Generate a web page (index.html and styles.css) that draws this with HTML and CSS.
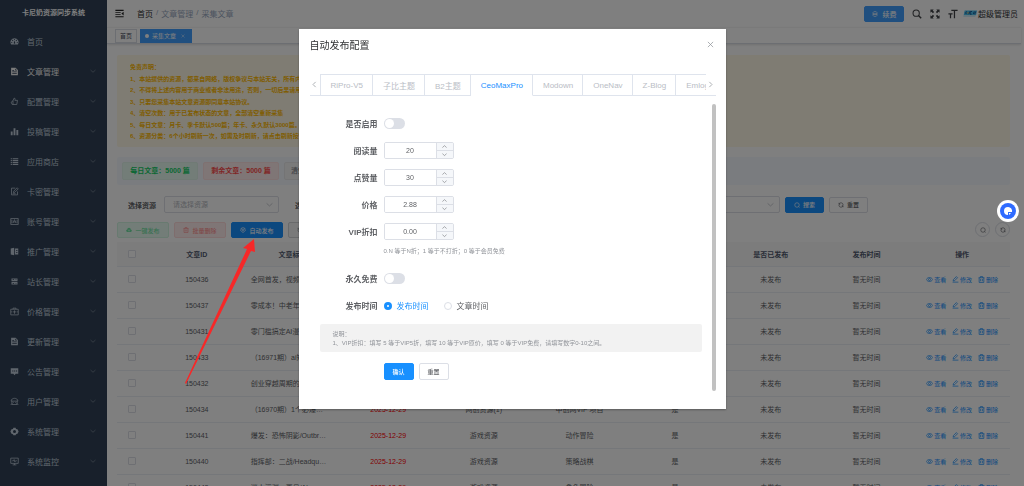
FILE: index.html
```
<!DOCTYPE html>
<html lang="zh-CN">
<head>
    <meta charset="UTF-8">
    <title>卡尼奶资源同步系统</title>
    <link rel="stylesheet" href="styles.css">
</head>
<body>
    <!-- 图标 -->
    <svg class="sprite" aria-hidden="true">
        <symbol id="i-dashboard" viewBox="0 0 24 24"><path fill="currentColor" fill-rule="evenodd" d="M12 3a11 11 0 0 0-9 17h18a11 11 0 0 0-9-17zM11 5h2v3h-2zM5 8l2-1 2 2-2 2zM17 7l2 1-2 3-2-2zM3 14h3v2H3zM18 14h3v2h-3zM12 9l2 7a2 2 0 1 1-4 0z"/></symbol>
        <symbol id="i-doc" viewBox="0 0 24 24"><path fill="currentColor" fill-rule="evenodd" d="M3 2h12l6 6v14H3zM14 4v5h5zM6 12v2h12v-2zM6 16v2h12v-2zM6 8v2h5V8z"/></symbol>
        <symbol id="i-thumb" viewBox="0 0 24 24"><path fill="none" stroke="currentColor" stroke-width="2" d="M8 10l3-7c3 0 3 3 2 6h7l-2 11H8zM8 10L3 14l3 6h2"/></symbol>
        <symbol id="i-bars" viewBox="0 0 24 24"><path fill="currentColor" d="M2 12h5v10H2zM9.500 3h5v19h-5zM17 8h5v14h-5z"/></symbol>
        <symbol id="i-list" viewBox="0 0 24 24"><path fill="currentColor" d="M2 3h3v3H2zM7 3h15v3H7zM2 8h3v3H2zM7 8h15v3H7zM2 13h3v3H2zM7 13h15v3H7zM2 18h3v3H2zM7 18h15v3H7z"/></symbol>
        <symbol id="i-edit" viewBox="0 0 24 24"><path fill="none" stroke="currentColor" stroke-width="2" d="M14 3H4v18h16v-9M9 15l1-4 9-9 3 3-9 9zM7 18h8"/></symbol>
        <symbol id="i-account" viewBox="0 0 24 24"><path fill="none" stroke="currentColor" stroke-width="2" d="M2 4h20v16H2zM8 16l4-9 4 9M9 13h6M5 7v10M19 7v10"/></symbol>
        <symbol id="i-book" viewBox="0 0 24 24"><path fill="currentColor" fill-rule="evenodd" d="M2 4l9-2v20l-9-2zM13 4h9v16h-9zM16 8v2h4V8zM16 13v2h4v-2z"/></symbol>
        <symbol id="i-server" viewBox="0 0 24 24"><path fill="currentColor" fill-rule="evenodd" d="M4 4h16v7H4zM4 13h16v7H4zM7 6v2h4V6zM15 6v2h2V6zM7 16v2h4v-2zM15 16v2h2v-2z"/></symbol>
        <symbol id="i-price" viewBox="0 0 24 24"><path fill="none" stroke="currentColor" stroke-width="2" d="M2 6h20v15H2zM8 6V3h8v3M12 9v9M7 13h10M2 13h3M19 13h3"/></symbol>
        <symbol id="i-chat" viewBox="0 0 24 24"><path fill="currentColor" fill-rule="evenodd" d="M2 3h20v15h-7l-3 4-3-4H2zM6 9v3h3V9zM11 9v3h3V9zM16 9v3h3V9z"/></symbol>
        <symbol id="i-user" viewBox="0 0 24 24"><path fill="none" stroke="currentColor" stroke-width="2" d="M3 11c0-10 18-10 18 0zM5 11v9h14v-9M9 14v2M15 14v2M2 21l4-4M22 21l-4-4"/></symbol>
        <symbol id="i-gear" viewBox="0 0 24 24"><path fill="currentColor" fill-rule="evenodd" d="M9 2h6l1 3 4 1 3 6-3 6-4 1-1 3H9l-1-3-4-1-3-6 3-6 4-1zM12 8a4 4 0 1 0 0 8 4 4 0 0 0 0-8z"/></symbol>
        <symbol id="i-setting" viewBox="0 0 24 24"><path fill="none" stroke="currentColor" stroke-width="3" d="M12 2l3 2 5 2v5l1 3-4 4-3 3h-4l-3-3-4-4 1-3V6l5-2z"/><circle cx="12" cy="12" r="3" fill="none" stroke="currentColor" stroke-width="2.500"/></symbol>
        <symbol id="i-monitor" viewBox="0 0 24 24"><path fill="none" stroke="currentColor" stroke-width="2" d="M2 3h20v14H2zM7 21h10M12 17v4M6 10h3l2-3 2 6 2-3h3"/></symbol>
        <symbol id="i-down" viewBox="0 0 24 24"><path fill="none" stroke="currentColor" stroke-width="2.500" d="M2 8l10 9 10-9"/></symbol>
        <symbol id="i-up" viewBox="0 0 24 24"><path fill="none" stroke="currentColor" stroke-width="2.500" d="M2 17l10-9 10 9"/></symbol>
        <symbol id="i-left" viewBox="0 0 24 24"><path fill="none" stroke="currentColor" stroke-width="2.500" d="M16 3l-9 9 9 9"/></symbol>
        <symbol id="i-right" viewBox="0 0 24 24"><path fill="none" stroke="currentColor" stroke-width="2.500" d="M8 3l9 9-9 9"/></symbol>
        <symbol id="i-close" viewBox="0 0 24 24"><path fill="none" stroke="currentColor" stroke-width="2.500" d="M3 3l18 18M21 3L3 21"/></symbol>
        <symbol id="i-fold" viewBox="0 0 24 24"><path fill="currentColor" d="M1 2h22v3H1zM1 8h14v2H1zM1 13h14v2H1zM1 19h22v3H1zM23 7v10l-6-5z"/></symbol>
        <symbol id="i-search" viewBox="0 0 24 24"><circle cx="10" cy="10" r="7.500" fill="none" stroke="currentColor" stroke-width="2.500"/><path stroke="currentColor" stroke-width="3.500" d="M15.500 15.500L22 22"/></symbol>
        <symbol id="i-find" viewBox="0 0 24 24"><circle cx="12" cy="12" r="9" fill="none" stroke="currentColor" stroke-width="2.500"/><path stroke="currentColor" stroke-width="2.500" d="M18 18l4 4"/></symbol>
        <symbol id="i-full" viewBox="0 0 24 24"><path fill="currentColor" d="M1 1h8L6.500 3.500 10 7l-3 3-3.500-3.500L1 9zM23 1v8l-2.500-2.500L17 10l-3-3 3.500-3.500L15 1zM1 23v-8l2.500 2.500L7 14l3 3-3.500 3.500L9 23zM23 23h-8l2.500-2.500L14 17l3-3 3.500 3.500L23 15z"/></symbol>
        <symbol id="i-size" viewBox="0 0 24 24"><path fill="currentColor" d="M8 2h15v3h-6v17h-3V5H8zM1 10h10v3H7.500v9h-3v-9H1z"/></symbol>
        <symbol id="i-coin" viewBox="0 0 24 24"><path fill="none" stroke="currentColor" stroke-width="2.500" d="M4 6c0-5 16-5 16 0v12c0 5-16 5-16 0zM4 8c0 4 16 4 16 0M4 14h16"/></symbol>
        <symbol id="i-cloud" viewBox="0 0 24 24"><path fill="currentColor" fill-rule="evenodd" d="M6 20a5 5 0 0 1-1-10 7 7 0 0 1 14 0 5 5 0 0 1-1 10zM12 10l-4 4h3v4h2v-4h3z"/></symbol>
        <symbol id="i-trash" viewBox="0 0 24 24"><path fill="none" stroke="currentColor" stroke-width="2.500" d="M2 6h20M8 6V2h8v4M4 6v16h16V6M9 10v8M15 10v8"/></symbol>
        <symbol id="i-refresh" viewBox="0 0 24 24"><path fill="none" stroke="currentColor" stroke-width="2.500" d="M4 8a9 9 0 0 1 16 0v6M20 16a9 9 0 0 1-16 0v-6M4 3v6h5M20 21v-6h-5"/></symbol>
        <symbol id="i-eye" viewBox="0 0 24 24"><path fill="none" stroke="currentColor" stroke-width="2.500" d="M1 12c5-9 17-9 22 0-5 9-17 9-22 0z"/><circle cx="12" cy="12" r="3.500" fill="none" stroke="currentColor" stroke-width="2.500"/></symbol>
        <symbol id="i-pen" viewBox="0 0 24 24"><path fill="none" stroke="currentColor" stroke-width="2.500" d="M4 17l1-5L15 2l4 4L9 16zM2 21h20"/></symbol>
    </svg>

    <div class="app">
        <aside class="sidebar">
            <h1 class="logo">卡尼奶资源同步系统</h1>
            <nav class="menu" id="menu"></nav>
        </aside>

        <main class="main">
            <header class="navbar">
                <svg class="icon fold"><use href="#i-fold"/></svg>
                <nav class="breadcrumb">
                    <a href="#">首页</a><i>/</i><span>文章管理</span><i>/</i><span>采集文章</span>
                </nav>
                <div class="nav-right">
                    <button class="btn primary renew"><svg class="icon"><use href="#i-coin"/></svg>续费</button>
                    <svg class="icon tool"><use href="#i-search"/></svg>
                    <svg class="icon tool"><use href="#i-full"/></svg>
                    <svg class="icon tool"><use href="#i-size"/></svg>
                    <div class="user">
                        <svg class="avatar" viewBox="0 0 42 20"><path fill="#4cc3f0" d="M5 1h37l-3 14H2z"/><path fill="none" stroke="#1b5f9e" stroke-width="3" d="M12 4l-5 4 4 4M20 4l-3 8M27 4h-5l-1 8h5M34 4l-3 8M38 4l-3 8"/><path fill="#e3b34c" d="M13 6h4v4h-4z"/><path stroke="#b8e3f4" stroke-width="3" d="M1 18h36"/></svg>
                        <span>超级管理员</span>
                    </div>
                </div>
            </header>

            <div class="tags">
                <a href="#" class="tag-link">首页</a>
                <a href="#" class="tag-link active"><b class="dot"></b>采集文章<svg class="icon"><use href="#i-close"/></svg></a>
            </div>

            <div class="content">
                <div class="notice">
                    <p>免责声明：</p>
                    <p>1、本站提供的资源，都来自网络，版权争议与本站无关，所有内容及软件的文章仅限用于学习和研究目的。</p>
                    <p>2、不得将上述内容用于商业或者非法用途，否则，一切后果请用户自负。</p>
                    <p>3、只要您采集本站文章资源即同意本站协议。</p>
                    <p>4、清空次数：用于已发布状态的文章，全部清空重新采集</p>
                    <p>5、每日文章：月卡、季卡默认500篇；年卡、永久默认3000篇。</p>
                    <p>6、资源分类：6个小时刷新一次，如需及时刷新，请点击刷新按钮。</p>
                </div>

                <div class="stats">
                    <span class="stat green">每日文章：5000 篇</span>
                    <span class="stat red">剩余文章：5000 篇</span>
                    <span class="stat gray">清空次数：3 次</span>
                </div>

                <form class="filter">
                    <label for="source">选择资源</label>
                    <span class="select"><select id="source"><option>请选择资源</option></select><svg class="icon"><use href="#i-down"/></svg></span>
                    <label for="category" class="second">选择分类</label>
                    <span class="select wide"><select id="category"><option>请选择分类</option></select><svg class="icon"><use href="#i-down"/></svg></span>
                    <button type="button" class="btn primary small"><svg class="icon"><use href="#i-find"/></svg>搜索</button>
                    <button type="button" class="btn small"><svg class="icon"><use href="#i-refresh"/></svg>重置</button>
                </form>

                <div class="actions">
                    <button class="btn success"><svg class="icon"><use href="#i-cloud"/></svg>一键发布</button>
                    <button class="btn danger"><svg class="icon"><use href="#i-trash"/></svg>批量删除</button>
                    <button class="btn primary"><svg class="icon"><use href="#i-setting"/></svg>自动发布</button>
                    <button class="btn info"><svg class="icon"><use href="#i-refresh"/></svg>清空次数</button>
                    <div class="rounds">
                        <button class="round" aria-label="搜索"><svg class="icon"><use href="#i-find"/></svg></button>
                        <button class="round" aria-label="刷新"><svg class="icon"><use href="#i-refresh"/></svg></button>
                    </div>
                </div>

                <table class="list">
                    <thead>
                        <tr>
                            <th class="check"><input type="checkbox" aria-label="全选"></th>
                            <th>文章ID</th>
                            <th>文章标题</th>
                            <th>更新时间</th>
                            <th>一级分类</th>
                            <th>二级分类</th>
                            <th>是否采集</th>
                            <th>是否已发布</th>
                            <th>发布时间</th>
                            <th>操作</th>
                        </tr>
                    </thead>
                    <tbody id="rows"></tbody>
                </table>
            </div>
        </main>
    </div>

    <!-- 自动发布配置弹窗 -->
    <div class="mask">
        <div class="dialog" role="dialog" aria-labelledby="dialogTitle">
            <div class="dialog-head">
                <h2 id="dialogTitle">自动发布配置</h2>
                <button class="plain" aria-label="关闭"><svg class="icon"><use href="#i-close"/></svg></button>
            </div>

            <div class="tabs">
                <button class="plain tab-arrow" aria-label="上一页"><svg class="icon"><use href="#i-left"/></svg></button>
                <div class="tab-list">
                    <button class="tab">RiPro-V5</button>
                    <button class="tab">子比主题</button>
                    <button class="tab">B2主题</button>
                    <button class="tab active">CeoMaxPro</button>
                    <button class="tab">Modown</button>
                    <button class="tab">OneNav</button>
                    <button class="tab">Z-Blog</button>
                    <button class="tab">Emlog</button>
                </div>
                <button class="plain tab-arrow" aria-label="下一页"><svg class="icon"><use href="#i-right"/></svg></button>
            </div>

            <div class="dialog-body">
                <form class="config">
                    <div class="field">
                        <label for="enable">是否启用</label>
                        <input type="checkbox" class="switch" id="enable">
                    </div>
                    <div class="field">
                        <label for="views">阅读量</label>
                        <div class="number"><input type="text" id="views" value="20"><span class="steps"><button type="button" aria-label="增加"><svg class="icon"><use href="#i-up"/></svg></button><button type="button" aria-label="减少"><svg class="icon"><use href="#i-down"/></svg></button></span></div>
                    </div>
                    <div class="field">
                        <label for="likes">点赞量</label>
                        <div class="number"><input type="text" id="likes" value="30"><span class="steps"><button type="button" aria-label="增加"><svg class="icon"><use href="#i-up"/></svg></button><button type="button" aria-label="减少"><svg class="icon"><use href="#i-down"/></svg></button></span></div>
                    </div>
                    <div class="field">
                        <label for="price">价格</label>
                        <div class="number"><input type="text" id="price" value="2.88"><span class="steps"><button type="button" aria-label="增加"><svg class="icon"><use href="#i-up"/></svg></button><button type="button" aria-label="减少"><svg class="icon"><use href="#i-down"/></svg></button></span></div>
                    </div>
                    <div class="field">
                        <label for="discount">VIP折扣</label>
                        <div class="number"><input type="text" id="discount" value="0.00"><span class="steps"><button type="button" aria-label="增加"><svg class="icon"><use href="#i-up"/></svg></button><button type="button" aria-label="减少"><svg class="icon"><use href="#i-down"/></svg></button></span></div>
                        <p class="tip">0.N 等于N折；1 等于不打折；0 等于会员免费</p>
                    </div>
                    <div class="field">
                        <label for="free">永久免费</label>
                        <input type="checkbox" class="switch" id="free">
                    </div>
                    <div class="field">
                        <span class="label">发布时间</span>
                        <div class="radios">
                            <label><input type="radio" name="time" checked><span>发布时间</span></label>
                            <label><input type="radio" name="time"><span>文章时间</span></label>
                        </div>
                    </div>
                    <div class="explain">
                        <p>说明：</p>
                        <p>1、VIP折扣：填写 5 等于VIP5折，填写 10 等于VIP原价，填写 0 等于VIP免费，请填写数字0-10之间。</p>
                    </div>
                    <div class="buttons">
                        <button type="button" class="btn primary">确认</button>
                        <button type="button" class="btn">重置</button>
                    </div>
                </form>
                <div class="scrollbar"></div>
            </div>
        </div>
    </div>

    <!-- 指向自动发布按钮的箭头 -->
    <svg class="arrow" viewBox="0 0 72 146">
        <path fill="#f62828" d="M70 1L59 10l4 1L1 145l1 1L67 13l4 1z"/>
    </svg>

    <button class="float-btn" aria-label="助手">
        <svg viewBox="0 0 22 22"><circle cx="11" cy="11" r="8" fill="#2f6bff"/><path fill="#fff" d="M11 7a4 4 0 1 0 0 8v-3h4a4 4 0 0 0-4-5zM12 13h2l-2 2z"/></svg>
    </button>

    <script>
        const menus = [
            ['dashboard', '首页'], ['doc', '文章管理'], ['thumb', '配置管理'], ['bars', '投稿管理'],
            ['list', '应用商店'], ['edit', '卡密管理'], ['account', '账号管理'], ['book', '推广管理'],
            ['server', '站长管理'], ['price', '价格管理'], ['doc', '更新管理'], ['chat', '公告管理'],
            ['user', '用户管理'], ['gear', '系统管理'], ['monitor', '系统监控']
        ];

        const articles = [
            ['150436', '全网首发，视频号最新玩法拆解', '网创资源(1)', '中创网VIP 项目'],
            ['150437', '零成本！中老年赛道养生号教学', '网创资源(1)', '中创网VIP 项目'],
            ['150431', '零门槛搞定AI漫剧全流程实操', '网创资源(1)', '中创网VIP 项目'],
            ['150433', '（16971期）ai短视频带货实战', '网创资源(1)', '中创网VIP 项目'],
            ['150432', '创业穿越周期的底层方法论课', '网创资源(1)', '中创网VIP 项目'],
            ['150434', '（16970期）1个必爆选题公式', '网创资源(1)', '中创网VIP 项目'],
            ['150441', '爆发：恐怖阴影/Outbreak Shadows', '游戏资源', '动作冒险'],
            ['150440', '指挥部：二战/Headquarters World War II', '游戏资源', '策略战棋'],
            ['150442', '迷人深渊：再见/Abyss', '游戏资源', '角色冒险']
        ];

        const icon = name => `<svg class="icon"><use href="#i-${name}"/></svg>`;

        document.getElementById('menu').innerHTML = menus.map(([name, text], index) => `
            <a href="#" class="${index === 1 ? 'current' : ''}">
                ${icon(name)}<span>${text}</span>${index ? icon('down') : ''}
            </a>
        `).join('');

        document.getElementById('rows').innerHTML = articles.map(([id, title, first, second]) => `
            <tr>
                <td class="check"><input type="checkbox" aria-label="${id}"></td>
                <td>${id}</td>
                <td class="title">${title}</td>
                <td class="date">2025-12-29</td>
                <td>${first}</td>
                <td>${second}</td>
                <td>是</td>
                <td>未发布</td>
                <td>暂无时间</td>
                <td class="ops">
                    <a href="#">${icon('eye')}查看</a>
                    <a href="#">${icon('pen')}修改</a>
                    <a href="#">${icon('trash')}删除</a>
                </td>
            </tr>
        `).join('');
    </script>
</body>
</html>
```
FILE: styles.css
```
* {
    box-sizing: border-box;
}
body {
    margin: 0;
    height: 100vh;
    overflow: hidden;
    font-family: "Liberation Sans", "Noto Sans CJK SC", sans-serif;
    font-size: 7px;
    color: #606266;
    background: #fff;
}
h1, h2, p {
    margin: 0;
}
a {
    color: inherit;
    text-decoration: none;
}
button, input, select {
    margin: 0;
    padding: 0;
    font: inherit;
    color: inherit;
}
.sprite {
    display: none;
}
.icon {
    width: 7px;
    height: 7px;
    flex: none;
}
.app {
    display: flex;
    height: 100%;
}

/* 左侧菜单 */
.sidebar {
    width: 107px;
    flex: none;
    overflow: hidden;
    background: #304156;
    color: #bfcbd9;
}
.logo {
    height: 26px;
    line-height: 26px;
    font-size: 7px;
    text-align: center;
    color: #fff;
}
.menu a {
    display: flex;
    align-items: center;
    height: 30px;
    padding: 0 11px 0 10px;
    gap: 8px;
    font-size: 8px;
}
.menu span {
    flex: 1;
}
.menu .icon {
    width: 9px;
    height: 9px;
}
.menu span + .icon {
    width: 6px;
    height: 6px;
    color: #8794a4;
}
.menu .current {
    color: #f4f4f5;
}

/* 顶部 */
.main {
    flex: 1;
    min-width: 0;
    padding-right: 3px;
}
.navbar {
    display: flex;
    align-items: center;
    height: 27px;
    padding: 0 3px 0 8px;
}
.fold {
    width: 9px;
    height: 9px;
    color: #222;
}
.breadcrumb {
    display: flex;
    margin-left: 13px;
    font-size: 8px;
    color: #97a8be;
}
.breadcrumb a {
    color: #303133;
}
.breadcrumb i {
    margin: 0 3px;
    font-style: normal;
}
.nav-right {
    display: flex;
    align-items: center;
    gap: 8px;
    margin-left: auto;
}
.tool {
    width: 10px;
    height: 10px;
    color: #404347;
}
.user {
    display: flex;
    align-items: center;
    gap: 1px;
    margin-left: -3px;
    font-size: 8px;
    color: #303133;
}
.avatar {
    width: 14px;
    height: 7px;
}
.tags {
    display: flex;
    align-items: center;
    gap: 3px;
    height: 17px;
    padding-left: 8px;
    border-top: 1px solid #f4f4f4;
    border-bottom: 1px solid #d8dce5;
    box-shadow: 0 1px 2px rgba(0,0,0,0.12);
}
.tag-link {
    display: flex;
    align-items: center;
    gap: 3px;
    height: 14px;
    padding: 0 4px;
    border: 1px solid #d8dce5;
    font-size: 6px;
    color: #495060;
}
.tag-link.active {
    padding: 0 6px 0 4px;
    background: #409eff;
    border-color: #409eff;
    color: #fff;
}
.tag-link .icon {
    width: 4px;
    height: 4px;
    margin-left: 2px;
}
.dot {
    width: 4px;
    height: 4px;
    border-radius: 50%;
    background: #fff;
}

/* 按钮 */
.btn {
    display: flex;
    align-items: center;
    justify-content: center;
    gap: 3px;
    height: 16px;
    border: 1px solid #dcdfe6;
    border-radius: 2px;
    background: #fff;
    font-size: 6px;
    font-weight: 500;
    color: #606266;
}
.btn .icon {
    width: 6px;
    height: 6px;
}
.btn.primary {
    background: #1890ff;
    border-color: #1890ff;
    color: #fff;
}
.btn.success {
    background: #e7faf0;
    border-color: #d0f5e0;
    color: #71e2a3;
}
.btn.danger {
    background: #ffeded;
    border-color: #ffdbdb;
    color: #ff9292;
}
.btn.info {
    background: #f4f4f5;
    border-color: #d3d4d6;
    color: #909399;
}
.btn.renew {
    width: 40px;
    gap: 5px;
    background: #409eff;
    border-color: #409eff;
    font-size: 7px;
}

/* 内容区 */
.content {
    padding: 11px 11px 0 10px;
}
.notice {
    display: flex;
    flex-direction: column;
    justify-content: space-between;
    min-height: 92px;
    padding: 7px 13px 5px;
    border-radius: 2px;
    background: #fff8e6;
    font-size: 6px;
    line-height: 11px;
    font-weight: bold;
    color: #ffba00;
}
.notice p {
    white-space: nowrap;
    overflow: hidden;
}
.stats {
    display: flex;
    align-items: center;
    gap: 5px;
    height: 28px;
    margin-top: 10px;
    padding: 0 5px;
    border-radius: 2px;
    background: #f5f9ff;
}
.stat {
    height: 18px;
    line-height: 16px;
    width: 76px;
    border: 1px solid;
    border-radius: 2px;
    font-size: 7px;
    font-weight: bold;
    text-align: center;
}
.stat.green {
    background: #e7faf0;
    border-color: #e0f5ea;
    color: #13ce66;
}
.stat.red {
    background: #ffeded;
    border-color: #ffe3e3;
    color: #ff4949;
}
.stat.gray {
    background: #f4f4f5;
    border-color: #e9e9eb;
    color: #909399;
    text-align: left;
    padding-left: 6px;
}
.filter {
    display: flex;
    align-items: center;
    height: 17px;
    margin-top: 11px;
    padding: 0 142px 0 11px;
}
.filter label {
    width: 36px;
    font-weight: bold;
    color: #606266;
}
.filter .second {
    margin-left: 16px;
}
.select {
    position: relative;
    width: 115px;
}
.select.wide {
    flex: 1;
}
.select select {
    display: block;
    width: 100%;
    height: 17px;
    padding: 0 8px;
    appearance: none;
    border: 1px solid #dcdfe6;
    border-radius: 2px;
    background: #fff;
    color: #b4b8c0;
}
.select .icon {
    position: absolute;
    top: 5px;
    right: 6px;
    color: #b4b8c0;
}
.btn.small {
    width: 39px;
    margin-left: 5px;
}
.actions {
    display: flex;
    gap: 5px;
    margin-top: 9px;
}
.actions .btn {
    width: 52px;
}
.rounds {
    display: flex;
    gap: 5px;
    margin-left: auto;
}
.round {
    display: flex;
    align-items: center;
    justify-content: center;
    width: 15px;
    height: 15px;
    border: 1px solid #dcdfe6;
    border-radius: 50%;
    background: #fff;
}
.round .icon {
    width: 6px;
    height: 6px;
}

/* 表格 */
.list {
    width: 100%;
    margin-top: 4px;
    table-layout: fixed;
    border-collapse: collapse;
    text-align: center;
}
.list th {
    height: 24px;
    padding: 0;
    background: #f8f8f9;
    border-bottom: 1px solid #ebeef5;
    color: #515a6e;
}
.list td {
    height: 26px;
    padding: 0;
    border-bottom: 1px solid #ebeef5;
    white-space: nowrap;
}
.list .check {
    width: 32px;
}
.list .title {
    padding: 0 12px 0 6px;
    text-align: left;
    overflow: hidden;
    text-overflow: ellipsis;
}
.list .date {
    color: #f00;
}
.list input {
    display: block;
    width: 8px;
    height: 8px;
    margin: 0 0 0 11px;
    appearance: none;
    border: 1px solid #dcdfe6;
    border-radius: 1px;
    background: #fff;
}
.ops a {
    display: inline-flex;
    align-items: center;
    margin: 0 2px;
    font-size: 6px;
    color: #1890ff;
}
.ops .icon {
    margin-right: 1px;
}

/* 弹窗 */
.mask {
    position: fixed;
    inset: 0;
    background: rgba(0,0,0,0.5);
}
.dialog {
    width: 41.7%;
    margin: 6vh auto 0;
    padding: 10px 10px 18px 11px;
    background: #fff;
    box-shadow: 0 1px 2px rgba(0,0,0,0.3);
}
.dialog-head {
    display: flex;
    justify-content: space-between;
    height: 35px;
    padding-right: 2px;
}
.dialog-head h2 {
    line-height: 14px;
    font-size: 10px;
    font-weight: normal;
    color: #303133;
}
.plain {
    display: flex;
    align-items: center;
    justify-content: center;
    height: 11px;
    border: 0;
    background: none;
    color: #909399;
}
.tabs {
    display: flex;
    align-items: center;
}
.tab-arrow {
    width: 10px;
    height: 22px;
    flex: none;
    border-bottom: 1px solid #dfe4ed;
}
.tab-list {
    display: flex;
    flex: 1;
    min-width: 0;
    overflow: hidden;
    border-left: 1px solid #dfe4ed;
}
.tab {
    flex: none;
    height: 22px;
    padding: 0 9px 0 10px;
    border: 1px solid #dfe4ed;
    border-left: 0;
    background: #fff;
    font-size: 8px;
    color: #b9bdc5;
}
.tab.active {
    border-bottom-color: #fff;
    color: #1890ff;
}
.dialog-body {
    display: flex;
    justify-content: space-between;
    gap: 10px;
    margin-top: 8px;
}
.config {
    flex: 1;
    padding: 11px 0 11px 10px;
}
.field {
    display: flex;
    flex-wrap: wrap;
    align-items: center;
    min-height: 17px;
    margin-bottom: 10px;
}
.field > label, .field > .label {
    width: 58px;
    margin-right: 6px;
    text-align: right;
    font-size: 8px;
    font-weight: bold;
}
.switch {
    width: 21px;
    height: 11px;
    padding: 1px;
    appearance: none;
    border-radius: 6px;
    background: #dcdfe6;
}
.switch::before {
    content: "";
    display: block;
    width: 9px;
    height: 9px;
    border-radius: 50%;
    background: #fff;
}
.number {
    display: flex;
    width: 70px;
    height: 17px;
    border: 1px solid #dcdfe6;
    border-radius: 2px;
    overflow: hidden;
}
.number input {
    flex: 1;
    min-width: 0;
    border: 0;
    text-align: center;
    font-size: 7px;
}
.steps {
    display: flex;
    flex-direction: column;
    width: 17px;
    border-left: 1px solid #dcdfe6;
}
.steps button {
    display: flex;
    align-items: center;
    justify-content: center;
    flex: 1;
    border: 0;
    background: #f5f7fa;
}
.steps button:last-child {
    border-top: 1px solid #dcdfe6;
}
.steps .icon {
    width: 5px;
    height: 5px;
}
.tip {
    width: 100%;
    margin: 6px 0 3px 64px;
    line-height: 11px;
    font-size: 6px;
    color: #909399;
}
.radios {
    display: flex;
    gap: 15px;
    font-size: 8px;
}
.radios label {
    display: flex;
    align-items: center;
    gap: 5px;
}
.radios input {
    width: 8px;
    height: 8px;
    appearance: none;
    border: 1px solid #dcdfe6;
    border-radius: 50%;
}
.radios input:checked {
    border: 3px solid #1890ff;
}
.radios input:checked + span {
    color: #1890ff;
}
.explain {
    padding: 6px 13px 4px;
    border-radius: 2px;
    background: #f2f2f2;
    line-height: 9px;
    font-size: 6px;
    color: #909399;
}
.buttons {
    display: flex;
    gap: 5px;
    margin: 11px 0 0 64px;
}
.buttons .btn {
    width: 30px;
    height: 17px;
}
.scrollbar {
    width: 4px;
    border-radius: 2px;
    background: #c1c1c1;
}

.arrow {
    position: fixed;
    left: 184px;
    top: 238px;
    width: 72px;
    height: 146px;
}
.float-btn {
    position: fixed;
    right: 5px;
    top: 200px;
    width: 22px;
    height: 22px;
    border: 0;
    border-radius: 50%;
    background: #fff;
}
.float-btn svg {
    display: block;
    width: 22px;
    height: 22px;
}
```
